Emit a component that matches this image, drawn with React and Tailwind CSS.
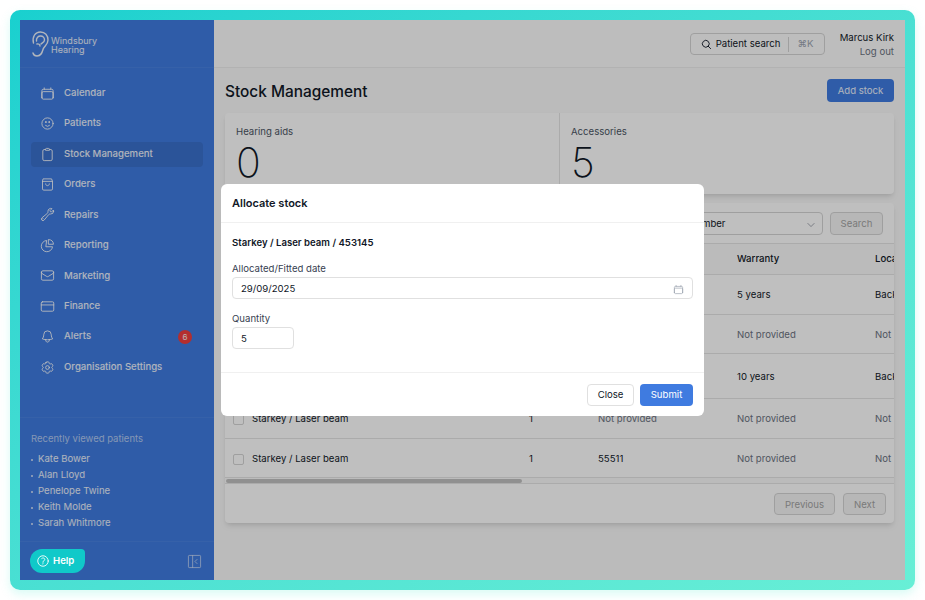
import {
  HiOutlineCalendar,
  HiOutlineFaceSmile,
  HiOutlineClipboard,
  HiOutlineWrench,
  HiOutlineEnvelope,
  HiOutlineBell,
  HiOutlineCog6Tooth,
  HiOutlineMagnifyingGlass,
  HiOutlineQuestionMarkCircle,
  HiOutlineChevronDown,
} from "react-icons/hi2";

const OrdersIcon = ({ className }) => (
  <svg viewBox="0 0 24 24" fill="none" stroke="currentColor" strokeWidth="1.5" strokeLinecap="round" strokeLinejoin="round" className={className}>
    <path d="M5.5 3h13l1.5 4v12a2 2 0 0 1-2 2H6a2 2 0 0 1-2-2V7z" />
    <path d="M4 7h16" />
    <path d="M9 11c0 4 6 4 6 0" />
  </svg>
);

const FinanceIcon = ({ className }) => (
  <svg viewBox="0 0 24 24" fill="none" stroke="currentColor" strokeWidth="1.5" strokeLinecap="round" strokeLinejoin="round" className={className}>
    <rect x="2" y="4.5" width="20" height="15" rx="2" />
    <path d="M2 9.5h20" />
  </svg>
);

const ReportingIcon = ({ className }) => (
  <svg viewBox="0 0 24 24" fill="none" stroke="currentColor" strokeWidth="1.5" strokeLinecap="round" strokeLinejoin="round" className={className}>
    <path d="M10 4a9 9 0 1 0 10 10h-10z" />
    <path d="M14 2.500A8 8 0 0 1 21.500 10H14z" />
  </svg>
);

const EarLogo = () => (
  <svg viewBox="0 0 18 26" fill="none" stroke="currentColor" strokeWidth="1.4" strokeLinecap="round" className="w-[18px] h-[26px] shrink-0">
    <path d="M2.5 12C1 6 4 1 9.5 1 14 1 17 4.500 17 9c0 5-4 6-5 9.500C11 22 10 25 6 25c-2 0-3.500-1-4-3" />
    <path d="M5.500 10C5 6.500 7.500 5 9.500 5c2.500 0 4 2 4 4 0 2.500-2.500 3-3.500 4" />
    <path d="M6 13c1.500-.5 3 .5 3 2" />
  </svg>
);

const navItems = [
  { label: "Calendar", icon: HiOutlineCalendar },
  { label: "Patients", icon: HiOutlineFaceSmile },
  { label: "Stock Management", icon: HiOutlineClipboard, active: true },
  { label: "Orders", icon: OrdersIcon },
  { label: "Repairs", icon: HiOutlineWrench },
  { label: "Reporting", icon: ReportingIcon },
  { label: "Marketing", icon: HiOutlineEnvelope },
  { label: "Finance", icon: FinanceIcon },
  { label: "Alerts", icon: HiOutlineBell, badge: 6 },
  { label: "Organisation Settings", icon: HiOutlineCog6Tooth },
];

const recent = ["Kate Bower", "Alan Lloyd", "Penelope Twine", "Keith Molde", "Sarah Whitmore"];

const rows = [
  { h: "h-[40px] pt-[2px]", name: "Starkey / Laser beam", qty: "1", serial: "453145", warranty: "5 years", location: "Back" },
  { h: "h-[39px] pt-[2px]", name: "Starkey / Laser beam", qty: "1", serial: "Not provided", warranty: "Not provided", location: "Not" },
  { h: "h-[45px] pt-[2px]", name: "Starkey / Laser beam", qty: "1", serial: "Not provided", warranty: "10 years", location: "Back" },
  { h: "h-[40px] pt-[1px]", name: "Starkey / Laser beam", qty: "1", serial: "Not provided", warranty: "Not provided", location: "Not" },
  { h: "h-[39px] pt-[2px]", name: "Starkey / Laser beam", qty: "1", serial: "55511", warranty: "Not provided", location: "Not" },
];

const cellTone = (value) => (value.startsWith("Not") ? "text-[#6b7280]" : "text-[#111827]");

const Sidebar = () => (
  <aside className="w-[194px] shrink-0 bg-[#3f7be0] flex flex-col text-white/90">
    <div className="h-[48px] flex items-center pl-[11px] border-b border-white/5">
      <EarLogo />
      <div className="ml-[2px] pt-[2px] text-[9px] leading-[9px] text-white/90">
        <div>Windsbury</div>
        <div>Hearing</div>
      </div>
    </div>
    <nav className="mt-[12.7px] px-[11px] flex flex-col gap-[5.45px]">
      {navItems.map((item) => (
        <div
          key={item.label}
          className={`h-[25px] rounded-[4px] flex items-center pl-[9px] pr-[11px] ${item.active ? "bg-[#3a70cc]" : ""}`}
        >
          <item.icon className="w-[15px] h-[15px] shrink-0" />
          <span className="ml-[9px] text-[9.6px] font-medium">{item.label}</span>
          {item.badge && (
            <span className="ml-auto w-[14px] h-[14px] rounded-full bg-[#f03e3e] text-[8px] flex items-center justify-center">
              {item.badge}
            </span>
          )}
        </div>
      ))}
    </nav>
    <div className="mt-auto border-t border-white/5 pl-[11px] pt-[14px] pb-[10px]">
      <div className="text-[9.5px] text-white/60">Recently viewed patients</div>
      <ul className="mt-[5px]">
        {recent.map((name) => (
          <li key={name} className="h-[16px] pt-[1px] flex items-center text-[9.6px]">
            <span className="w-[2px] h-[2px] rounded-full bg-white/80 mr-[5px]" />
            {name}
          </li>
        ))}
      </ul>
    </div>
    <div className="h-[39px] border-t border-white/5 flex items-center justify-end pr-[12px]">
      <svg viewBox="0 0 16 16" fill="none" stroke="currentColor" strokeWidth="1" className="w-[15px] h-[15px] text-white/60">
        <rect x="1.5" y="1.5" width="13" height="13" rx="1" />
        <path d="M6 1.5v13M11 5.500 8.500 8l2.500 2.500" />
      </svg>
    </div>
  </aside>
);

const Header = () => (
  <header className="h-[48px] shrink-0 bg-[#fdfdfd] border-b border-[#eeeeee] flex items-center justify-end pr-[11px]">
    <div className="h-[22px] w-[135px] rounded-[4px] border border-[#d4d4d4] flex items-center pl-[10px] pt-[1px] text-[9.6px] text-[#111827]">
      <HiOutlineMagnifyingGlass className="w-[11px] h-[11px]" strokeWidth={2} />
      <span className="ml-[4px]">Patient search</span>
      <span className="ml-[8px] h-[15px] border-l border-[#d4d4d4]" />
      <span className="ml-[8px] text-[#9ca3af]">⌘K</span>
    </div>
    <div className="ml-[15px] pt-[2px] text-right text-[9.6px] leading-[14px]">
      <div className="text-[#111827]">Marcus Kirk</div>
      <div className="text-[#6b7280]">Log out</div>
    </div>
  </header>
);

const StockTable = () => (
  <div className="mt-[9px] bg-white rounded-[4px] shadow-md overflow-hidden">
    <div className="h-[40px] flex items-center justify-end pr-[11px] gap-[7px]">
      <div className="w-[130px] h-[23px] pt-[3px] rounded-[4px] border border-[#d4d4d4] flex items-center justify-between px-[6px] text-[9.6px] text-[#111827]">
        <span className="pl-[2px]">mber</span>
        <HiOutlineChevronDown className="w-[10px] h-[10px] text-[#6b7280]" />
      </div>
      <div className="w-[53px] h-[23px] pt-[3px] rounded-[4px] border border-[#d4d4d4] bg-[#f5f5f5] flex items-center justify-center text-[9.6px] text-[#a3a3a3]">
        Search
      </div>
    </div>
    <div className="h-[32px] bg-[#fafafa] border-y border-[#e5e5e5] flex items-center text-[9.6px] font-medium text-[#111827]">
      <div className="w-[512px]" />
      <div className="w-[138px] shrink-0">Warranty</div>
      <div className="w-[19px] overflow-hidden">Location</div>
    </div>
    {rows.map((row, i) => (
      <div key={i} className={`${row.h} border-b border-[#e5e5e5] flex items-center text-[9.6px] overflow-hidden`}>
        <span className="ml-[8px] w-[11px] h-[11px] rounded-[2px] border border-[#d4d4d4] shrink-0" />
        <div className="ml-[8px] w-[277px] shrink-0 text-[#111827]">{row.name}</div>
        <div className="w-[69px] shrink-0 text-[#111827]">{row.qty}</div>
        <div className={`w-[139px] shrink-0 ${cellTone(row.serial)}`}>{row.serial}</div>
        <div className={`w-[138px] shrink-0 ${cellTone(row.warranty)}`}>{row.warranty}</div>
        <div className={`shrink-0 ${cellTone(row.location)}`}>{row.location}</div>
      </div>
    ))}
    <div className="h-[6px] bg-[#fafafa] border-b border-[#e5e5e5] flex items-center pl-[1px]">
      <div className="w-[296px] h-[4px] rounded-full bg-[#c1c1c1]" />
    </div>
    <div className="h-[39px] flex items-center justify-end gap-[8px] pr-[8px]">
      <div className="w-[61px] h-[22px] pt-[3px] rounded-[4px] border border-[#d4d4d4] bg-[#f5f5f5] flex items-center justify-center text-[9.6px] text-[#a3a3a3]">
        Previous
      </div>
      <div className="w-[43px] h-[22px] pt-[3px] rounded-[4px] border border-[#d4d4d4] bg-[#f5f5f5] flex items-center justify-center text-[9.6px] text-[#a3a3a3]">
        Next
      </div>
    </div>
  </div>
);

const Modal = () => (
  <div className="absolute left-[201px] top-[164px] w-[483px] h-[232px] bg-white rounded-[6px] flex flex-col text-[#111827]">
    <div className="h-[39px] shrink-0 border-b border-[#f0f0f0] flex items-center pl-[11px] text-[11px] font-semibold">
      Allocate stock
    </div>
    <div className="flex-1 px-[11px] pt-[14px]">
      <div className="text-[9.6px] font-semibold leading-[12px]">Starkey / Laser beam / 453145</div>
      <div className="mt-[14px] text-[9.6px] leading-[12px] text-[#374151]">Allocated/Fitted date</div>
      <div className="mt-[2px] h-[22px] pt-[2px] rounded-[4px] border border-[#e0e0e0] flex items-center justify-between pl-[8px] pr-[8px] text-[9.6px]">
        <span>29/09/2025</span>
        <HiOutlineCalendar className="w-[11px] h-[11px] text-[#9ca3af]" />
      </div>
      <div className="mt-[14px] text-[9.6px] leading-[12px] text-[#374151]">Quantity</div>
      <div className="mt-[2px] w-[62px] h-[22px] pt-[2px] rounded-[4px] border border-[#e0e0e0] flex items-center pl-[8px] text-[9.6px]">
        5
      </div>
    </div>
    <div className="h-[44px] shrink-0 border-t border-[#f0f0f0] flex items-center justify-end gap-[6px] pr-[11px]">
      <div className="w-[47px] h-[22px] pt-[2px] rounded-[4px] border border-[#e0e0e0] flex items-center justify-center text-[9.6px]">
        Close
      </div>
      <div className="w-[53px] h-[22px] pt-[2px] rounded-[4px] bg-[#3f7be0] text-white flex items-center justify-center text-[9.6px]">
        Submit
      </div>
    </div>
  </div>
);

export default function App() {
  return (
    <div className="w-[925px] h-[600px] bg-white overflow-hidden p-[10px] font-['Inter',sans-serif]">
      <div className="w-[905px] h-[580px] p-[10px] rounded-[10px] bg-gradient-to-br from-[#18d0cf] to-[#68efd6] shadow-[0_4px_10px_rgba(104,239,214,0.25)]">
        <div className="relative w-[885px] h-[560px] flex overflow-hidden">
          <Sidebar />
          <main className="flex-1 min-w-0 bg-[#fafafa] flex flex-col">
            <Header />
            <div className="px-[11px] flex-1 min-h-0">
              <div className="h-[45px] flex items-center justify-between">
                <h1 className="pt-[2px] text-[15.4px] font-medium text-[#111827]">Stock Management</h1>
                <div className="w-[67px] h-[23px] pt-[1px] rounded-[4px] bg-[#3f7be0] text-white/90 text-[9.6px] flex items-center justify-center">
                  Add stock
                </div>
              </div>
              <div className="h-[81px] bg-white rounded-[4px] shadow-md flex">
                <div className="w-[335px] border-r border-[#e5e5e5] pl-[11px] pt-[12px]">
                  <div className="text-[9.6px] text-[#4b5563]">Hearing aids</div>
                  <div className="text-[41px] font-extralight leading-[46px] text-[#111827]">0</div>
                </div>
                <div className="pl-[11px] pt-[12px]">
                  <div className="text-[9.6px] text-[#4b5563]">Accessories</div>
                  <div className="text-[41px] font-extralight leading-[46px] text-[#111827]">5</div>
                </div>
              </div>
              <StockTable />
            </div>
          </main>
          {/* dimmed backdrop behind the dialog */}
          <div className="absolute inset-0 bg-black/25" />
          <Modal />
          <div className="absolute left-[10px] top-[529px] w-[55px] h-[24px] rounded-[12px] rounded-tr-[4px] bg-[#10c9c9] text-white text-[9.6px] font-semibold flex items-center pl-[6px] gap-[3px]">
            <HiOutlineQuestionMarkCircle className="w-[14px] h-[14px]" />
            Help
          </div>
        </div>
      </div>
    </div>
  );
}
